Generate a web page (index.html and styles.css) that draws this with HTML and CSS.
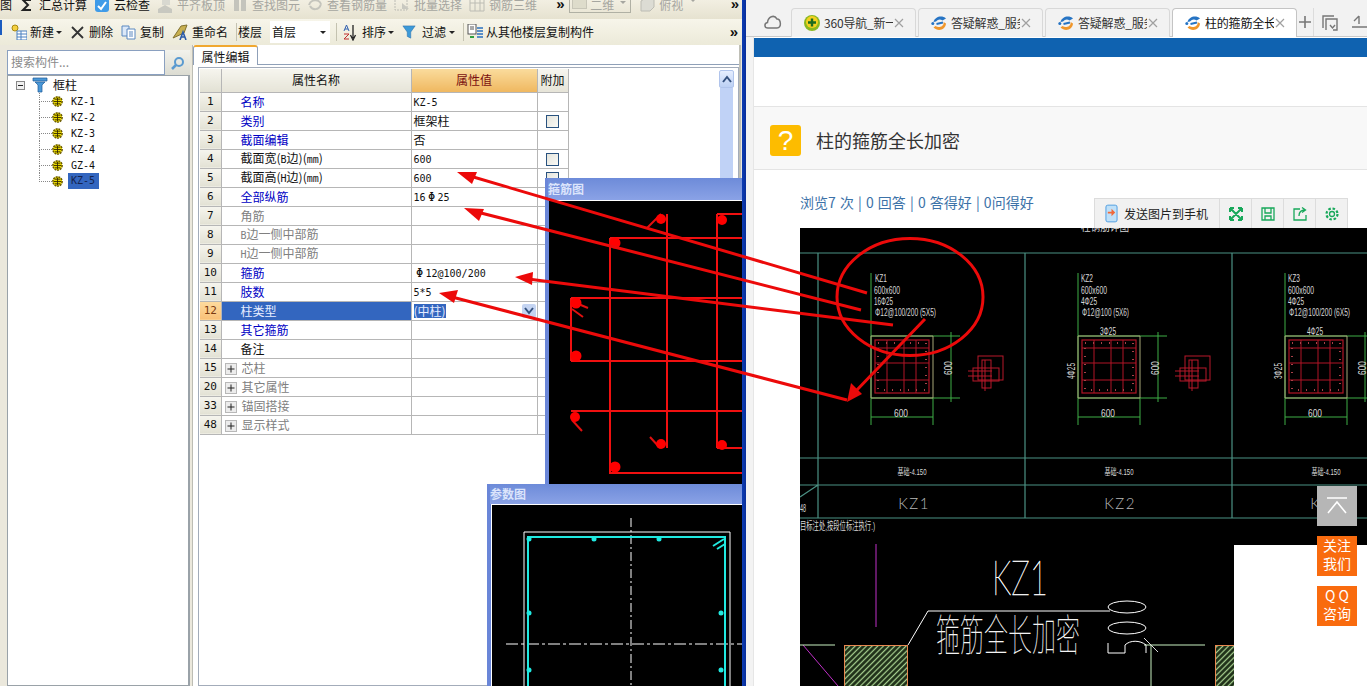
FILE: index.html
```html
<!DOCTYPE html>
<html lang="zh-CN">
<head>
<meta charset="utf-8">
<title>柱的箍筋全长加密</title>
<link rel="stylesheet" href="styles.css">
</head>
<body>
<svg class="defs" width="0" height="0">
  <symbol id="ie" viewBox="0 0 16 16">
    <path d="M2.500 7C4 1.500 11 0 15 3.500L11.500 5.500C9.500 3.800 7 4 5 6.500Z" fill="#2674c4"/>
    <circle cx="1.800" cy="8.500" r="1.500" fill="#2674c4"/>
    <path d="M12.500 7C13.500 11 8 13.500 4.500 11L2.500 12.500C7 17 14.500 15 15 8.500Z" fill="#f0962a"/>
    <path d="M5.500 9L12 7.500" stroke="#2674c4" stroke-width="1.800"/>
  </symbol>
  <symbol id="gear" viewBox="0 0 14 14">
    <circle cx="7" cy="7" r="5" fill="#e8d800" stroke="#6a5a00" stroke-width="1.600" stroke-dasharray="2 1"/>
    <path d="M3 7H11M7 3V11M4 4.500H10M4 9.500H10" stroke="#3a3000" stroke-width="1"/>
  </symbol>
  <symbol id="xmark" viewBox="0 0 12 12">
    <path d="M2 2L10 10M10 2L2 10" stroke="#a0a0a0" stroke-width="1.200"/>
  </symbol>
  <symbol id="plusbox" viewBox="0 0 12 12">
    <rect x=".5" y=".5" width="11" height="11" fill="#ececec" stroke="#b8b8b8"/>
    <path d="M2.500 6H9.500M6 2.500V9.500" stroke="#222" stroke-width="1"/>
  </symbol>
</svg>

<div class="screen">
  <section class="app">
    <div class="bar-top">
      <span class="top-text">图</span>
      <span class="top-item"><svg class="ic16" viewBox="0 0 16 16"><path d="M12 3H4L9 8L4 13H12" fill="none" stroke="#222" stroke-width="2"/></svg><span class="top-text">汇总计算</span></span>
      <span class="top-item"><svg class="ic16" viewBox="0 0 16 16"><rect x="1" y="1" width="14" height="14" rx="3" fill="#3f9be8"/><path d="M4 9L7 12L12 5" fill="none" stroke="#fff" stroke-width="2"/></svg><span class="top-text">云检查</span></span>
      <span class="top-item off"><svg class="ic16" viewBox="0 0 16 16"><path d="M1 12L8 8L15 12V16H1Z" fill="#c8c8c0"/><path d="M5 3H13V8H5Z" fill="#d8d8d0"/></svg><span class="top-text">平齐板顶</span></span>
      <span class="top-item off"><svg class="ic16" viewBox="0 0 16 16"><rect x="2" y="1" width="5" height="13" fill="#c4c4bc"/><rect x="9" y="1" width="5" height="13" fill="#c4c4bc"/></svg><span class="top-text">查找图元</span></span>
      <span class="top-item off"><svg class="ic16" viewBox="0 0 16 16"><path d="M2 8C4 2 12 2 14 7M14 7C12 14 5 13 3 9" fill="none" stroke="#c4c4bc" stroke-width="2"/></svg><span class="top-text">查看钢筋量</span></span>
      <span class="top-item off"><svg class="ic16" viewBox="0 0 16 16"><rect x="1" y="0" width="12" height="13" fill="none" stroke="#bcbcb4" stroke-dasharray="2 1"/><path d="M8 6L15 12H8Z" fill="#c8c8c0"/></svg><span class="top-text">批量选择</span></span>
      <span class="top-item off"><svg class="ic16" viewBox="0 0 16 16"><path d="M1 1H15V14H1ZM6 1V14M11 1V14M1 6H15" fill="none" stroke="#bcbcb4"/></svg><span class="top-text">钢筋三维</span></span>
      <span class="chev chev-top">»</span>
      <span class="mode-box"><span class="mode-thumb"></span><span class="top-text off">二维</span><span class="caret off-caret"></span></span>
      <span class="top-item off view"><svg class="ic16" viewBox="0 0 16 16"><path d="M2 4L7 1H15V10L11 14H2Z" fill="#dcdcd4" stroke="#bcbcb4"/></svg><span class="top-text">俯视</span><span class="caret off-caret"></span></span>
      <span class="chev chev-end">»</span>
    </div>

    <div class="bar-second">
      <span class="tool"><svg class="ic16" viewBox="0 0 16 16"><circle cx="4" cy="4" r="3" fill="#f4d040" stroke="#a88810"/><rect x="6" y="7" width="10" height="9" fill="#fff" stroke="#4a80c0"/><path d="M6 10H16M6 13H16M10 7V16" stroke="#4a80c0"/></svg><span>新建</span><span class="caret"></span></span>
      <span class="tool gap-x"><svg class="ic13" viewBox="0 0 13 13"><path d="M1 1L12 12M12 1L1 12" stroke="#333" stroke-width="1.800"/></svg><span>删除</span></span>
      <span class="tool"><svg class="ic15" viewBox="0 0 15 15"><path d="M1 1H8V11H1Z" fill="#dbe8f8" stroke="#5a88c0"/><path d="M6 4H14V14H6Z" fill="#fff" stroke="#5a88c0"/><path d="M8 7H12M8 9H12M8 11H12" stroke="#5a88c0"/></svg><span>复制</span></span>
      <span class="tool"><svg class="ic16" viewBox="0 0 16 16"><path d="M1 14L9 2L15 1L12 9Z" fill="#c8b050" stroke="#807030"/><path d="M8 16L11 8L14 16M9 13H13" fill="none" stroke="#2a5aa8" stroke-width="1.600"/></svg><span>重命名</span></span>
      <span class="sep"></span>
      <span class="floor-label">楼层</span>
      <span class="floor-select"><span>首层</span><span class="caret"></span></span>
      <span class="sep sep-floor"></span>
      <span class="tool tool-sort"><svg class="ic17" viewBox="0 0 17 17"><path d="M11 1V14M8.500 11L11 16L13.500 11" fill="none" stroke="#222" stroke-width="1.300"/><path d="M2 7L4.500 1L7 7M3 5H6" fill="none" stroke="#3060b0"/><path d="M2 10H7L2 15H7" fill="none" stroke="#c03030"/></svg><span>排序</span><span class="caret"></span></span>
      <span class="tool"><svg class="ic14" viewBox="0 0 14 16"><path d="M0 1H14L9 8V15L5 13V8Z" fill="#3c9ad8" stroke="#2a6ea8" stroke-width=".6"/></svg><span class="tool-gap">过滤</span><span class="caret"></span></span>
      <span class="sep"></span>
      <span class="tool tool-copy"><svg class="ic16" viewBox="0 0 16 16"><rect x="1" y="0" width="8" height="10" fill="#fff" stroke="#555"/><path d="M3 3H7M3 5H7" stroke="#555"/><path d="M3 12H7V14H3Z" fill="#30a040"/><path d="M10 4H16M10 7H16M10 10H16M10 13H16" stroke="#2a70c0" stroke-width="1.500"/></svg><span>从其他楼层复制构件</span></span>
      <span class="chev">»</span>
    </div>

    <div class="workspace">
      <aside class="side">
        <div class="search"><span class="search-box">搜索构件...</span><span class="search-btn"><svg class="ic14" viewBox="0 0 14 14"><circle cx="8" cy="6" r="4" fill="none" stroke="#5a9ad0" stroke-width="2"/><path d="M5 9L1 13" stroke="#5a9ad0" stroke-width="2.500"/></svg></span></div>
        <div class="tree">
          <div class="tree-root"><span class="minus"></span><svg class="ic16 funnel" viewBox="0 0 16 16"><path d="M1 1H15V4H1ZM3 5H13L10 8V15H6V8Z" fill="#4a98d8" stroke="#1e5a98" stroke-width=".7"/></svg><span>框柱</span></div>
          <ul class="tree-list">
            <li><svg class="ic14" viewBox="0 0 14 14"><use href="#gear"/></svg><span class="mono">KZ-1</span></li>
            <li><svg class="ic14" viewBox="0 0 14 14"><use href="#gear"/></svg><span class="mono">KZ-2</span></li>
            <li><svg class="ic14" viewBox="0 0 14 14"><use href="#gear"/></svg><span class="mono">KZ-3</span></li>
            <li><svg class="ic14" viewBox="0 0 14 14"><use href="#gear"/></svg><span class="mono">KZ-4</span></li>
            <li><svg class="ic14" viewBox="0 0 14 14"><use href="#gear"/></svg><span class="mono">GZ-4</span></li>
            <li><svg class="ic14" viewBox="0 0 14 14"><use href="#gear"/></svg><span class="mono picked">KZ-5</span></li>
          </ul>
        </div>
      </aside>

      <main class="editor">
        <div class="tab-strip"><span class="tab-on">属性编辑</span></div>
        <div class="grid-frame">
          <table class="props">
            <colgroup><col class="c-idx"><col class="c-name"><col class="c-val"><col class="c-add"></colgroup>
            <thead><tr><th class="idx"></th><th>属性名称</th><th class="val-head">属性值</th><th>附加</th></tr></thead>
            <tbody>
              <tr><td class="idx">1</td><td class="nm blue">名称</td><td class="v"><span class="mono">KZ-5</span></td><td></td></tr>
              <tr><td class="idx">2</td><td class="nm blue">类别</td><td class="v">框架柱</td><td class="ck"><span class="check"></span></td></tr>
              <tr><td class="idx">3</td><td class="nm blue">截面编辑</td><td class="v">否</td><td></td></tr>
              <tr><td class="idx">4</td><td class="nm">截面宽(<span class="mono">B</span>边)(<span class="mono">mm</span>)</td><td class="v"><span class="mono">600</span></td><td class="ck"><span class="check"></span></td></tr>
              <tr><td class="idx">5</td><td class="nm">截面高(<span class="mono">H</span>边)(<span class="mono">mm</span>)</td><td class="v"><span class="mono">600</span></td><td class="ck"><span class="check"></span></td></tr>
              <tr><td class="idx">6</td><td class="nm blue">全部纵筋</td><td class="v"><span class="mono">16<span class="phi">Φ</span>25</span></td><td></td></tr>
              <tr><td class="idx">7</td><td class="nm grey">角筋</td><td class="v"></td><td></td></tr>
              <tr><td class="idx">8</td><td class="nm grey"><span class="mono">B</span>边一侧中部筋</td><td class="v"></td><td></td></tr>
              <tr><td class="idx">9</td><td class="nm grey"><span class="mono">H</span>边一侧中部筋</td><td class="v"></td><td></td></tr>
              <tr><td class="idx">10</td><td class="nm blue">箍筋</td><td class="v"><span class="mono"><span class="phi">Φ</span>12@100/200</span></td><td></td></tr>
              <tr><td class="idx">11</td><td class="nm blue">肢数</td><td class="v"><span class="mono">5*5</span></td><td></td></tr>
              <tr class="sel"><td class="idx">12</td><td class="nm">柱类型</td><td class="v"><span class="val-sel">(中柱)</span><span class="drop"><svg class="ic10" viewBox="0 0 10 8"><path d="M1 1L5 6L9 1" fill="none" stroke="#33507e" stroke-width="2"/></svg></span></td><td></td></tr>
              <tr><td class="idx">13</td><td class="nm blue">其它箍筋</td><td class="v"></td><td></td></tr>
              <tr><td class="idx">14</td><td class="nm">备注</td><td class="v"></td><td></td></tr>
              <tr><td class="idx">15</td><td class="nm grey"><svg class="pbox" viewBox="0 0 12 12"><use href="#plusbox"/></svg>芯柱</td><td class="v"></td><td></td></tr>
              <tr><td class="idx">20</td><td class="nm grey"><svg class="pbox" viewBox="0 0 12 12"><use href="#plusbox"/></svg>其它属性</td><td class="v"></td><td></td></tr>
              <tr><td class="idx">33</td><td class="nm grey"><svg class="pbox" viewBox="0 0 12 12"><use href="#plusbox"/></svg>锚固搭接</td><td class="v"></td><td></td></tr>
              <tr><td class="idx">48</td><td class="nm grey"><svg class="pbox" viewBox="0 0 12 12"><use href="#plusbox"/></svg>显示样式</td><td class="v"></td><td></td></tr>
            </tbody>
          </table>
          <div class="scroll"><span class="scroll-btn"><svg class="ic10" viewBox="0 0 10 8"><path d="M1 7L5 2L9 7" fill="none" stroke="#33507e" stroke-width="2"/></svg></span><span class="scroll-track"></span></div>
        </div>
      </main>
    </div>

    <div class="win win-rebar">
      <div class="win-title">箍筋图</div>
      <svg class="win-art" viewBox="549 201 193 297">
        <g fill="none" stroke="#f01010" stroke-width="2">
          <path d="M610 238V473H742M610 238H742M667 214V448M717 214V448M717 214H742M717 448H742M571 298V361M571 298H742M571 361H742M571 411H742"/>
          <path d="M647 228L661 214M576 303L588 308M572 309L583 317M572 420L582 431M650 437L660 448" stroke="#e01010"/>
        </g>
        <g fill="#f00">
          <circle cx="661" cy="219" r="5"/><circle cx="722" cy="220" r="5"/><circle cx="615" cy="243" r="5.500"/>
          <circle cx="576" cy="303" r="5.500"/><circle cx="576" cy="356" r="5.500"/><circle cx="575" cy="417" r="5"/>
          <circle cx="661" cy="444" r="5"/><circle cx="722" cy="445" r="5"/><circle cx="615" cy="467" r="5.500"/>
        </g>
      </svg>
    </div>

    <div class="win win-param">
      <div class="win-title">参数图</div>
      <svg class="win-art" viewBox="492 505 250 181">
        <path d="M631 518V686" stroke="#fff" stroke-dasharray="9 3 2 3" fill="none"/>
        <path d="M506 644H742" stroke="#fff" stroke-dasharray="12 3 3 3" fill="none"/>
        <path d="M524 686V532H730V686" fill="none" stroke="#fff"/>
        <path d="M528 686V537H725V686" fill="none" stroke="#20e8e0" stroke-width="2"/>
        <path d="M713 546L724 539M717 549L725 544" stroke="#20e8e0" stroke-width="2"/>
        <g fill="#20e8e0">
          <circle cx="529" cy="539" r="2.500"/><circle cx="594" cy="539" r="2.500"/><circle cx="659" cy="539" r="2.500"/>
          <circle cx="529" cy="613" r="2.500"/><circle cx="529" cy="670" r="2.500"/><circle cx="721" cy="613" r="2.500"/><circle cx="721" cy="670" r="2.500"/>
        </g>
      </svg>
    </div>
  </section>

  <div class="divider"></div>

  <section class="browser">
    <nav class="tabs">
      <svg class="cloud" viewBox="0 0 18 16"><path d="M4 14C0 14 0 9 3.500 8.500C4 3 10 0 13 5C17 5 18 14 13 14Z" fill="none" stroke="#777" stroke-width="1.500"/></svg>
      <div class="tab">
        <svg class="ic16" viewBox="0 0 16 16"><circle cx="8" cy="8" r="8" fill="#8ab820"/><circle cx="8" cy="7" r="6" fill="#f4d020"/><path d="M4 7.500H12M8 3.500V11.500" stroke="#1c6a20" stroke-width="2.400"/></svg>
        <span class="tab-text">360导航_新一</span>
        <svg class="x" viewBox="0 0 12 12"><use href="#xmark"/></svg>
      </div>
      <div class="tab">
        <svg class="ic16" viewBox="0 0 16 16"><use href="#ie"/></svg>
        <span class="tab-text">答疑解惑_服务</span>
        <svg class="x" viewBox="0 0 12 12"><use href="#xmark"/></svg>
      </div>
      <div class="tab">
        <svg class="ic16" viewBox="0 0 16 16"><use href="#ie"/></svg>
        <span class="tab-text">答疑解惑_服务</span>
        <svg class="x" viewBox="0 0 12 12"><use href="#xmark"/></svg>
      </div>
      <div class="tab tab-active">
        <svg class="ic16" viewBox="0 0 16 16"><use href="#ie"/></svg>
        <span class="tab-text">柱的箍筋全长</span>
        <svg class="x" viewBox="0 0 12 12"><use href="#xmark"/></svg>
      </div>
      <span class="tab-plus">
        <svg class="ic14" viewBox="0 0 14 14"><path d="M1 7H13M7 1V13" stroke="#777" stroke-width="1.600"/></svg>
      </span>
      <svg class="ic16 tab-tool" viewBox="0 0 16 16"><path d="M1 13V1H12M4 15V4H15V15H11M8 10L10.500 13L13 10" fill="none" stroke="#777" stroke-width="1.400"/></svg>
      <svg class="ic16 tab-tool2" viewBox="0 0 16 16"><path d="M8 1L3 6M8 1V9M1 12H16" fill="none" stroke="#777" stroke-width="1.400"/></svg>
    </nav>

    <div class="page">
      <div class="blue-band"></div>
      <div class="blank"></div>
      <div class="q-title">
        <span class="q-mark">?</span>
        <h1>柱的箍筋全长加密</h1>
      </div>
      <p class="stats">浏览7 次 | 0 回答 | 0 答得好 | 0问得好</p>
      <div class="figure">
        <div class="fig-tools">
          <span class="fig-send"><svg class="ic16 send-ic" viewBox="0 0 14 20"><rect x="1" y="1" width="12" height="18" rx="2" fill="#bfe0f8" stroke="#4a9ae0"/><path d="M3 8H7V5L11 9L7 13V10H3Z" fill="#f0683a"/></svg>发送图片到手机</span>
          <span class="fig-btn"><svg class="ic14" viewBox="0 0 14 14"><path d="M1 1L13 13M13 1L1 13M1 1V5M1 1H5M13 1H9M13 1V5M1 13V9M1 13H5M13 13H9M13 13V9" fill="none" stroke="#17a85a" stroke-width="2"/></svg></span>
          <span class="fig-btn"><svg class="ic14" viewBox="0 0 14 14"><path d="M1 1H13V13H1ZM4 1V6H10V1M4 13V9H10V13" fill="none" stroke="#17a85a" stroke-width="1.300"/></svg></span>
          <span class="fig-btn"><svg class="ic14" viewBox="0 0 14 14"><path d="M7 2H1V13H13V8M6 9C6 5 8 3 12 3M9 0.500L12.500 3L9 5.500" fill="none" stroke="#17a85a" stroke-width="1.300"/></svg></span>
          <span class="fig-btn"><svg class="ic14" viewBox="0 0 14 14"><circle cx="7" cy="7" r="2.500" fill="none" stroke="#17a85a" stroke-width="1.300"/><circle cx="7" cy="7" r="5.500" fill="none" stroke="#17a85a" stroke-width="2.200" stroke-dasharray="2.500 1.800"/></svg></span>
        </div>

        <svg class="cad" viewBox="800 228 567 458">
          <defs>
            <pattern id="hatch" width="4" height="4" patternUnits="userSpaceOnUse" patternTransform="rotate(-45)">
              <rect width="4" height="4" fill="#1a2a14"/>
              <path d="M0 1.500H4" stroke="#a8d090" stroke-width="1.300"/>
            </pattern>
            <g id="col-geo">
              <path d="M871 273V425M871 336H960M871 398H960M951 332V402M933 398V425M871 417H933" fill="none" stroke="#3fae46"/>
              <path d="M871 336H933V398H871Z" fill="none" stroke="#a8a878"/>
              <g fill="none" stroke="#b01426">
                <rect x="875" y="340" width="54" height="53" stroke-width="1.200"/>
                <path d="M887 340V393M904 340V393M916 340V393M875 348H929M875 363H929M875 380H929"/>
                <rect x="878" y="343" width="48" height="47" stroke="#a84048" stroke-width="2" stroke-dasharray="1 7"/>
              </g>
            </g>
            <g id="col-mini" fill="none" stroke="#b8182a">
              <rect x="978" y="356" width="25" height="24"/>
              <rect x="982" y="360" width="9" height="28"/>
              <rect x="973" y="368" width="26" height="13"/>
              <path d="M968 371H992M968 376H992M985 360V391"/>
            </g>
          </defs>
          <rect x="800" y="228" width="567" height="458" fill="#000"/>
          <text class="cad-t" x="1081" y="231" textLength="48" lengthAdjust="spacingAndGlyphs">柱钢筋详图</text>

          <path d="M800 253H1367M800 458H1367M800 485H1367M800 518H1367M818 253V518M1025 253V518M1232 253V518M800 497L818 485" stroke="#4b9184" stroke-width="1.200" fill="none"/>
          <text class="cad-t" x="800" y="512" textLength="6" lengthAdjust="spacingAndGlyphs">48</text>

          <use href="#col-geo"/>
          <use href="#col-mini"/>
          <use href="#col-geo" x="207"/>
          <use href="#col-mini" x="207"/>
          <use href="#col-geo" x="414"/>

          <text class="cad-t" x="875" y="282" textLength="12" lengthAdjust="spacingAndGlyphs">KZ1</text>
          <text class="cad-t" x="874" y="294" textLength="26" lengthAdjust="spacingAndGlyphs">600x600</text>
          <text class="cad-t" x="874" y="305" textLength="19" lengthAdjust="spacingAndGlyphs">16Φ25</text>
          <text class="cad-t" x="875" y="316" textLength="61" lengthAdjust="spacingAndGlyphs">Φ12@100/200 (5X5)</text>
          <text class="cad-t" x="901" y="417" textLength="14" lengthAdjust="spacingAndGlyphs" text-anchor="middle">600</text>
          <text class="cad-t" transform="translate(952 368) rotate(-90)" textLength="14" lengthAdjust="spacingAndGlyphs" text-anchor="middle">600</text>

          <text class="cad-t" x="1081" y="282" textLength="12" lengthAdjust="spacingAndGlyphs">KZ2</text>
          <text class="cad-t" x="1081" y="294" textLength="26" lengthAdjust="spacingAndGlyphs">600x600</text>
          <text class="cad-t" x="1081" y="305" textLength="16" lengthAdjust="spacingAndGlyphs">4Φ25</text>
          <text class="cad-t" x="1082" y="316" textLength="47" lengthAdjust="spacingAndGlyphs">Φ12@100 (5X6)</text>
          <text class="cad-t" x="1108" y="335" textLength="16" lengthAdjust="spacingAndGlyphs" text-anchor="middle">3Φ25</text>
          <text class="cad-t" transform="translate(1075 371) rotate(-90)" textLength="16" lengthAdjust="spacingAndGlyphs" text-anchor="middle">4Φ25</text>
          <text class="cad-t" x="1108" y="417" textLength="14" lengthAdjust="spacingAndGlyphs" text-anchor="middle">600</text>
          <text class="cad-t" transform="translate(1159 368) rotate(-90)" textLength="14" lengthAdjust="spacingAndGlyphs" text-anchor="middle">600</text>

          <text class="cad-t" x="1288" y="282" textLength="12" lengthAdjust="spacingAndGlyphs">KZ3</text>
          <text class="cad-t" x="1288" y="294" textLength="26" lengthAdjust="spacingAndGlyphs">600x600</text>
          <text class="cad-t" x="1288" y="305" textLength="16" lengthAdjust="spacingAndGlyphs">4Φ25</text>
          <text class="cad-t" x="1289" y="316" textLength="61" lengthAdjust="spacingAndGlyphs">Φ12@100/200 (6X5)</text>
          <text class="cad-t" x="1315" y="335" textLength="16" lengthAdjust="spacingAndGlyphs" text-anchor="middle">4Φ25</text>
          <text class="cad-t" transform="translate(1282 371) rotate(-90)" textLength="16" lengthAdjust="spacingAndGlyphs" text-anchor="middle">3Φ25</text>
          <text class="cad-t" x="1315" y="417" textLength="14" lengthAdjust="spacingAndGlyphs" text-anchor="middle">600</text>
          <text class="cad-t" transform="translate(1366 368) rotate(-90)" textLength="14" lengthAdjust="spacingAndGlyphs" text-anchor="middle">600</text>

          <text class="cad-t cad-s" x="912" y="475" textLength="29" lengthAdjust="spacingAndGlyphs" text-anchor="middle">基础-4.150</text>
          <text class="cad-t cad-s" x="1119" y="475" textLength="29" lengthAdjust="spacingAndGlyphs" text-anchor="middle">基础-4.150</text>
          <text class="cad-t cad-s" x="1326" y="475" textLength="29" lengthAdjust="spacingAndGlyphs" text-anchor="middle">基础-4.150</text>

          <text class="cad-name" x="914" y="509" text-anchor="middle">KZ1</text>
          <text class="cad-name" x="1120" y="509" text-anchor="middle">KZ2</text>
          <text class="cad-name" x="1326" y="509" text-anchor="middle">KZ3</text>
          <text class="cad-t" x="800" y="530" textLength="75" lengthAdjust="spacingAndGlyphs">目标注处,按段位标注执行.)</text>

          <path d="M876 544V627M876 670V686M803 645L838 686" stroke="#c030c8" fill="none"/>
          <path d="M800 645H835M1144 645H1205M1151 645V686" stroke="#c8f0c0" fill="none"/>
          <path d="M1144 638L1158 652" stroke="#ddd" fill="none"/>
          <rect x="844.500" y="645.500" width="63" height="45" fill="url(#hatch)" stroke="#e88850"/>
          <rect x="1215.500" y="645.500" width="30" height="45" fill="url(#hatch)" stroke="#e88850"/>
          <path d="M908 645L928 611H1110" stroke="#fff" fill="none"/>
          <ellipse cx="1127" cy="607" rx="19" ry="6" fill="none" stroke="#fff"/>
          <ellipse cx="1127" cy="628" rx="19" ry="6" fill="none" stroke="#fff"/>
          <path d="M1108 643V653H1125V645C1130 640 1140 640 1146 645V653" fill="none" stroke="#fff"/>
          <text class="cad-big" x="1020" y="595" text-anchor="middle" textLength="56" lengthAdjust="spacingAndGlyphs">KZ1</text>
          <text class="cad-hand" transform="translate(936 651) scale(1 1.800)" textLength="144" lengthAdjust="spacing">箍筋全长加密</text>
        </svg>
        <div class="white-corner"></div>
      </div>
    </div>

    <aside class="float-btns">
      <span class="fb fb-top"><svg class="top-ic" viewBox="0 0 24 18"><path d="M2 1H22M3 16L12 5L21 16" fill="none" stroke="#fff" stroke-width="1.600"/></svg></span>
      <span class="fb">关注<br>我们</span>
      <span class="fb">Q Q<br>咨询</span>
    </aside>
  </section>

  <svg class="marks" viewBox="0 0 1367 686">
    <g fill="none" stroke="#ec0a0a" stroke-width="3">
      <ellipse cx="910" cy="297" rx="73" ry="58.500"/>
      <path d="M470 176L867 293M477 212L861 310M528 279L893 325M452 297L847 400M925 319L855 392"/>
    </g>
    <g fill="#ec0a0a">
      <path d="M457 172L477 172L472 184Z"/>
      <path d="M464 208L484 209L479 221Z"/>
      <path d="M515 277L533 272L532 285Z"/>
      <path d="M439 293L458 290L454 303Z"/>
      <path d="M847 402L851 383L862 394Z"/>
    </g>
  </svg>
</div>
</body>
</html>
```

FILE: styles.css
```css
* { box-sizing: border-box; }
html, body { margin: 0; height: 100%; overflow: hidden; background: #fff; }
body { font: 12px/14px "Noto Sans CJK SC", "Liberation Sans", sans-serif; color: #111; }
.defs { position: absolute; }
svg { display: block; flex: none; }
ul { list-style: none; margin: 0; padding: 0; }
.mono { font-family: "DejaVu Sans Mono", "Noto Sans CJK SC", monospace; font-size: 10px; }
.phi { display: inline-block; width: 12px; text-align: center; font-size: 12px; line-height: 12px; }

.ic10 { width: 10px; height: 8px; }
.ic13 { width: 13px; height: 13px; }
.ic14 { width: 14px; height: 14px; }
.ic15 { width: 15px; height: 15px; }
.ic16 { width: 16px; height: 16px; }
.ic17 { width: 17px; height: 17px; }

.screen { position: relative; display: flex; width: 1367px; height: 686px; overflow: hidden; }

/* Left application */
.app { position: relative; width: 742px; height: 686px; overflow: hidden; background: #ebe8dc; display: flex; flex-direction: column; }
.bar-top { height: 19px; display: flex; gap: 7px; overflow: hidden; background: linear-gradient(#f2efe2, #e6e2d0); }
.top-text { display: block; margin-top: -2px; line-height: 14px; }
.top-item { display: flex; gap: 4px; align-items: flex-start; margin-top: -3px; }
.top-item .top-text { margin-top: 1px; }
.off { color: #a6a6a0; }
.chev { font-size: 15px; line-height: 14px; font-family: "Liberation Sans", sans-serif; font-weight: bold; color: #111; }
.chev-top { margin: -3px 0 0 12px; width: 9px; }
.chev-end { margin: -3px 0 0 auto; padding-right: 3px; }
.mode-box { width: 62px; height: 14px; margin: -1px 0 0 -3px; border: 1px solid #b0b0a4; border-top: 0; display: flex; gap: 3px; padding-left: 2px; }
.mode-box .top-text { margin-top: -1px; }
.mode-thumb { width: 15px; height: 10px; background: #dedccb; border: 1px solid #c8c6b8; }
.view { margin-left: 1px; }
.caret { display: inline-block; width: 0; height: 0; border: 3px solid transparent; border-top: 3px solid #222; border-bottom: 0; align-self: center; }
.off-caret { border-top-color: #a6a6a0; margin-left: 3px; margin-top: 2px; align-self: flex-start; }

.bar-second { position: relative; height: 26px; display: flex; align-items: center; gap: 8px; padding: 0 4px 0 11px; background: linear-gradient(#f7f5ea, #ecead9); }
.bar-second::before { content: ""; position: absolute; left: 0; top: 1px; width: 2px; height: 15px; background: #1c5cc0; }
.tool { display: flex; align-items: center; gap: 3px; }
.tool .caret { margin-left: -1px; }
.tool + .tool { gap: 4px; }
.gap-x { gap: 5px !important; margin-left: 1px; }
.sep { width: 1px; height: 18px; background: #c4c2b0; margin-right: -7px; }
.sep-floor { margin-left: -2px; margin-right: -3px; }
.floor-select { width: 60px; height: 22px; padding: 0 2px; background: #fff; display: flex; justify-content: space-between; align-items: center; }
.floor-select .caret { margin-right: 2px; }
.tool-gap { margin-left: 2px; }
.tool-copy { margin-left: 2px; }
.bar-second .chev { margin-left: auto; }

.workspace { flex: 1; display: flex; min-height: 0; }
.side { width: 190px; padding: 5px 0 0 7px; display: flex; flex-direction: column; }
.search { height: 25px; display: flex; }
.search-box { width: 158px; height: 25px; border: 1px solid #8aa0c0; background: #fff; color: #8a8a8a; line-height: 22px; padding-left: 3px; font-size: 12px; }
.search-btn { flex: 1; display: flex; align-items: center; justify-content: center; background: linear-gradient(#f2f2ec, #dcdcd2); }
.tree { flex: 1; background: #fff; border: 1px solid #9aa2a8; border-right-width: 2px; padding-top: 1px; }
.tree-root { display: flex; align-items: center; height: 16px; padding-left: 8px; }
.minus { width: 9px; height: 9px; border: 1px solid #888; position: relative; background: #f0f0f0; }
.minus::after { content: ""; position: absolute; left: 1px; right: 1px; top: 3px; height: 1px; background: #222; }
.funnel { margin: 0 5px 0 7px; }
.tree-list { margin-left: 31px; padding-top: 0; }
.tree-list li { position: relative; height: 16px; display: flex; align-items: center; padding-left: 12px; gap: 6px; }
.tree-list li::before { content: ""; position: absolute; left: 0; top: 0; height: 8px; width: 12px; border-left: 1px dotted #888; border-bottom: 1px dotted #888; }
.tree-list li:not(:last-child)::after { content: ""; position: absolute; left: 0; top: 8px; height: 8px; border-left: 1px dotted #888; }
.tree-list .ic14 { width: 13px; height: 13px; }
.tree-list .mono { padding: 1px 1px; line-height: 13px; }
.picked { background: #3366bf; color: #14234e; width: 31px; height: 16px; margin-left: -2px; padding-left: 3px !important; }

.editor { flex: 1; margin-left: 2px; background: #fff; border-left: 1px solid #bdbdb4; padding-left: 0; display: flex; flex-direction: column; border-right: 2px solid #bfbfb6; margin-right: 1px; }
.tab-strip { height: 20px; display: flex; padding-left: 0; }
.tab-on { width: 65px; height: 20px; line-height: 19px; text-align: center; background: #fff; border: 1px solid #8fa0b8; border-bottom: 0; border-top: 2px solid #f0a830; border-radius: 3px 3px 0 0; }
.tab-strip { border-bottom: 1px solid #8fa0b8; }
.grid-frame { flex: 1; margin: 2px 0 0 5px; border: 1px solid #a3acba; padding: 1px 2px 0 1px; display: flex; }

.props { table-layout: fixed; width: 368px; height: 365px; border-collapse: collapse; flex: none; align-self: flex-start; }
.c-idx { width: 21px; }
.c-name { width: 190px; }
.c-val { width: 126px; }
.c-add { width: 31px; }
.props th, .props td { padding: 0; border: 1px solid #b6b6b6; height: 19px; font-weight: normal; overflow: hidden; white-space: nowrap; }
.props th { height: 23px; background: linear-gradient(#f6f5ee, #e6e4d8); text-align: center; border-top: 0; }
.props .val-head { background: linear-gradient(#fadb9c, #efb860); color: #7a1010; }
.props td.idx, .props th.idx { background: linear-gradient(#f6f5ee, #e2e1d4); text-align: center; border-left: 0; font-size: 12px; }
.props td.idx { font-family: "DejaVu Sans Mono", monospace; font-size: 11px; }
.nm { padding-left: 19px !important; }
.nm .pbox { display: inline-block; vertical-align: -2px; }
.pbox { width: 12px; height: 12px; margin: 0 5px 0 -16px; }
.blue { color: #0000c4; }
.grey { color: #808080; }
.v { padding-left: 2px !important; position: relative; }
.ck { text-align: center; }
.check { display: inline-block; vertical-align: middle; width: 13px; height: 13px; border: 1px solid #29527f; background: linear-gradient(135deg, #e4e4dc, #fafaf6); }
.sel .idx { background: linear-gradient(#fedb9e, #f9c078) !important; color: #7a3a10; }
.sel .nm { background: #3366bf; color: #e8eeff; }
.val-sel { background: #3366bf; color: #e4ecff; display: inline-block; line-height: 14px; }
.drop { position: absolute; right: 1px; top: 2px; width: 14px; height: 14px; background: #c4d4f2; display: flex; align-items: center; justify-content: center; border-radius: 2px; }

.scroll { margin-left: auto; width: 15px; display: flex; flex-direction: column; margin-top: 1px; margin-right: 2px; height: 112px; }
.scroll-btn { height: 18px; background: linear-gradient(#e6eeff, #bcd0f4); border: 1px solid #b0c4ec; display: flex; align-items: center; justify-content: center; border-radius: 2px; }
.scroll-track { flex: 1; background: #c0d2f6; margin: 0 1px; }

.win { position: absolute; right: 0; background: linear-gradient(90deg, #6a86d8, #7a96e0); display: flex; flex-direction: column; }
.win-rebar { left: 545px; top: 178px; height: 320px; padding-left: 4px; }
.win-param { left: 487px; top: 484px; height: 202px; padding-left: 4px; }
.win-title { height: 22px; margin-left: -1px; color: #dbe4fb; font-weight: bold; line-height: 22px; letter-spacing: 0; background: linear-gradient(#6d8bd9, #8aa2e6); }
.win-param .win-title { height: 20px; line-height: 20px; }
.win-art { flex: 1; width: 100%; background: #000; min-height: 0; }
.win-rebar .win-art { border-top: 1px solid #fff; height: 298px; }
.win-param .win-art { border-top: 1px solid #fff; border-left: 1px solid #fff; }

.divider { width: 4px; background: linear-gradient(90deg, #0c3cb4, #0a2f9a); }

/* Right browser */
.browser { position: relative; flex: 1; display: flex; flex-direction: column; background: #f3f3f3; min-width: 0; }
.tabs { height: 37px; padding-top: 8px; display: flex; align-items: stretch; background: #f2f2f2; border-bottom: 1px solid #c9c9c9; position: relative; }
.cloud { width: 18px; height: 16px; margin: 6px 9px 0 18px; }
.tab { width: 125px; height: 29px; margin-right: 2px; padding: 0 10px 0 12px; display: flex; align-items: center; background: #f2f2f2; border: 1px solid #d8d8d8; border-bottom: 0; border-radius: 4px 4px 0 0; }
.tab-active { background: #fff; border-color: #c4c4c4; height: 29px; margin-right: 0; }
.tab-text { width: 76px; margin-left: 4px; overflow: hidden; white-space: nowrap; color: #333; font-size: 12px; letter-spacing: -.2px; }
.tab-active .tab-text { color: #111; }
.x { width: 12px; height: 12px; margin-left: 0; }
.tab-plus { width: 24px; display: flex; align-items: center; justify-content: center; margin: 0 0 0 0; border-right: 1px solid #dcdcdc; height: 28px; }
.tab-tool { margin: 7px 0 0 8px; }
.tab-tool2 { margin: 7px 0 0 13px; }

.page { flex: 1; margin-left: 7px; background: #fff; display: flex; flex-direction: column; min-height: 0; padding-top: 1px; border-left: 1px solid #e6e6e6; }
.blue-band { height: 19px; background: #0f62b0; }
.blank { height: 50px; border-bottom: 1px solid #e4e4e4; }
.q-title { height: 63px; padding: 4px 0 0 16px; display: flex; align-items: center; gap: 15px; background: #f8f8f8; border-bottom: 1px solid #e4e4e4; }
.q-mark { width: 31px; height: 31px; border-radius: 3px; background: #fdbc00; color: #fff; font: 28px/31px "Liberation Sans", sans-serif; text-align: center; }
h1 { margin: 0; font-weight: normal; font-size: 18px; line-height: 24px; color: #333; }
.stats { margin: 0; height: 58px; padding: 23px 0 0 46px; line-height: 18px; font-size: 14px; word-spacing: 1px; color: #3c72a8; }
.figure { position: relative; flex: 1; margin-left: 46px; min-height: 0; }
.cad { width: 567px; height: 458px; }
.white-corner { position: absolute; left: 434px; top: 317px; right: 0; bottom: 0; background: #fff; }
.fig-tools { position: absolute; top: -30px; left: 294px; width: 254px; height: 30px; display: flex; background: #f1f1f1; border: 1px solid #dcdcdc; border-bottom: 0; }
.fig-send { width: 125px; display: flex; align-items: center; gap: 6px; padding-left: 10px; color: #222; border-right: 1px solid #dcdcdc; }
.send-ic { width: 13px; height: 19px; }
.fig-btn { flex: 1; display: flex; align-items: center; justify-content: center; border-right: 1px solid #dcdcdc; }
.fig-btn:last-child { border-right: 0; }

.cad-t { fill: #d8d8d8; font: 11px "Liberation Sans", "Noto Sans CJK SC", sans-serif; }
.cad-s { font-size: 9px; }
.cad-name { fill: #b8b8b8; font: 300 15px "Lato", "Liberation Sans", sans-serif; letter-spacing: 1.500px; }
.cad-big { fill: #fff; stroke: #fff; stroke-width: .5px; font: 100 48px "Lato", "Liberation Sans", sans-serif; }
.cad-hand { fill: #f4f4f4; font: 100 24px "Noto Sans CJK SC", sans-serif; }

.float-btns { position: absolute; left: 571px; top: 486px; width: 40px; display: flex; flex-direction: column; gap: 10px; }
.fb { height: 40px; background: #f96b0e; color: #fff; font-size: 14px; line-height: 18px; text-align: center; padding-top: 0; }
.fb-top { background: #b6b6b6; display: flex; align-items: center; justify-content: center; padding: 0; }
.top-ic { width: 24px; height: 18px; }

.marks { position: absolute; left: 0; top: 0; width: 1367px; height: 686px; pointer-events: none; }
```
